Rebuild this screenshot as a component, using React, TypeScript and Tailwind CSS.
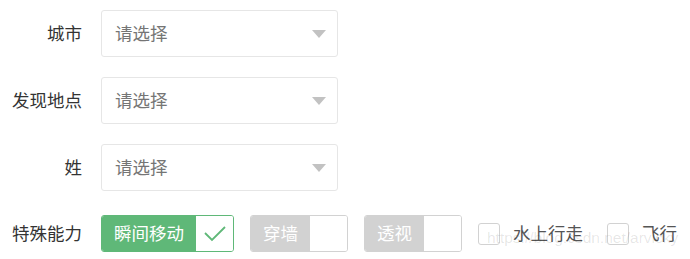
const cjk = { fontFamily: '"Noto Sans CJK SC", "Noto Sans", sans-serif' };

function Select({ label }: { label: string }) {
  return (
    <div className="flex h-[47px] items-center">
      <div className="w-[101px] pr-[19px] text-right text-[17.5px] text-[#333]">{label}</div>
      <div className="flex h-[47px] w-[237px] items-center justify-between rounded-[3px] border border-[#e6e6e6] bg-white pl-[13px] pr-[11px]">
        <span className="text-[17.5px] text-[#757575]">请选择</span>
        <span className="h-0 w-0 border-x-[7px] border-t-[8px] border-x-transparent border-t-[#c2c2c2]" />
      </div>
    </div>
  );
}

function Switch({ text, on }: { text: string; on?: boolean }) {
  return (
    <div
      className={
        on
          ? "flex h-[37px] items-stretch overflow-hidden rounded-[3px] border border-[#5fb878]"
          : "flex h-[37px] items-stretch overflow-hidden rounded-[3px] border border-[#d2d2d2]"
      }
    >
      <span
        className={
          on
            ? "flex items-center bg-[#5fb878] px-[12px] text-[17.5px] text-white"
            : "flex items-center bg-[#d2d2d2] px-[12px] text-[17.5px] text-white"
        }
      >
        {text}
      </span>
      <span className="flex w-[37px] items-center justify-center bg-white">
        {on && (
          <svg width="24" height="18" viewBox="0 0 24 18">
            <polyline points="2,8 9,15 22,2" fill="none" stroke="#5fb878" strokeWidth="1.8" />
          </svg>
        )}
      </span>
    </div>
  );
}

function Check({ text }: { text: string }) {
  return (
    <div className="flex items-center gap-[13px]">
      <span className="h-[22px] w-[22px] rounded-[3px] border border-[#d2d2d2] bg-white" />
      <span className="text-[17.5px] text-[#555]">{text}</span>
    </div>
  );
}

export default function App() {
  return (
    <div className="relative h-[259px] w-[690px] overflow-hidden bg-white pt-[10px]" style={cjk}>
      <div className="flex flex-col gap-[20px]">
        <Select label="城市" />
        <Select label="发现地点" />
        <Select label="姓" />
      </div>
      <div className="mt-[24px] flex h-[37px] items-center">
        <div className="w-[101px] pr-[19px] text-right text-[17.5px] text-[#333]">特殊能力</div>
        <div className="flex items-center gap-[16px]">
          <Switch text="瞬间移动" on />
          <Switch text="穿墙" />
          <Switch text="透视" />
        </div>
        <div className="ml-[16px] flex items-center gap-[24px]">
          <Check text="水上行走" />
          <Check text="飞行" />
        </div>
      </div>
      <div
        className="pointer-events-none absolute left-[487px] top-[226px] text-[15.5px] text-black/10"
        style={{ fontFamily: '"Liberation Sans", Arial, sans-serif' }}
      >
        https://blog.csdn.net/arvicky
      </div>
    </div>
  );
}
